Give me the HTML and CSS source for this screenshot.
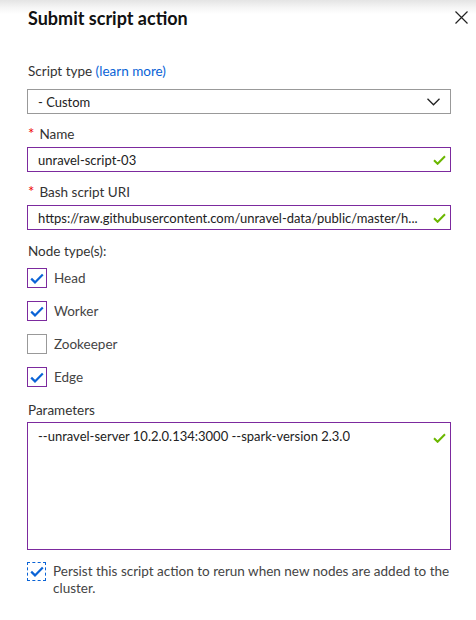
FILE: index.html
```html
<!DOCTYPE html>
<html>
<head>
<meta charset="utf-8">
<link rel="stylesheet" href="styles.css">
</head>
<body>
<div class="panel">
  <header class="head">
    <h1 class="title">Submit script action</h1>
    <svg class="close" width="13" height="13" viewBox="0 0 13 13"><path d="M0.5 0.5L12.5 12.5M12.5 0.5L0.5 12.5" stroke="#222" stroke-width="1.2" fill="none"/></svg>
  </header>

  <div class="label l-type">Script type <a class="link">(learn more)</a></div>
  <div class="box select">
    <span>- Custom</span>
    <svg width="13" height="8" viewBox="0 0 13 8"><path d="M0.5 0.8L6.5 6.8L12.5 0.8" stroke="#222" stroke-width="1.3" fill="none"/></svg>
  </div>

  <div class="label l-req"><span class="star">*</span>Name</div>
  <div class="box valid">
    <span class="val">unravel-script-03</span>
    <svg class="ok" width="13" height="10" viewBox="0 0 13 10"><path d="M1 5.2L4.6 8.8L12 1.2" stroke="#6bb700" stroke-width="2" fill="none"/></svg>
  </div>

  <div class="label l-req"><span class="star">*</span>Bash script URI</div>
  <div class="box valid">
    <span class="val">https://raw.githubusercontent.com/unravel-data/public/master/h...</span>
    <svg class="ok" width="13" height="10" viewBox="0 0 13 10"><path d="M1 5.2L4.6 8.8L12 1.2" stroke="#6bb700" stroke-width="2" fill="none"/></svg>
  </div>

  <div class="label l-node">Node type(s):</div>
  <div class="checks">
    <div class="check"><span class="cb on"><svg width="14" height="11" viewBox="0 0 14 11"><path d="M1.2 5.6L5 9.4L12.8 1.4" stroke="#0a63d6" stroke-width="2.2" fill="none"/></svg></span><span>Head</span></div>
    <div class="check"><span class="cb on"><svg width="14" height="11" viewBox="0 0 14 11"><path d="M1.2 5.6L5 9.4L12.8 1.4" stroke="#0a63d6" stroke-width="2.2" fill="none"/></svg></span><span>Worker</span></div>
    <div class="check"><span class="cb"></span><span>Zookeeper</span></div>
    <div class="check"><span class="cb on"><svg width="14" height="11" viewBox="0 0 14 11"><path d="M1.2 5.6L5 9.4L12.8 1.4" stroke="#0a63d6" stroke-width="2.2" fill="none"/></svg></span><span>Edge</span></div>
  </div>

  <div class="label l-param">Parameters</div>
  <div class="box valid area">
    <span class="val">--unravel-server 10.2.0.134:3000 --spark-version 2.3.0</span>
    <svg class="ok" width="13" height="10" viewBox="0 0 13 10"><path d="M1 5.2L4.6 8.8L12 1.2" stroke="#6bb700" stroke-width="2" fill="none"/></svg>
  </div>

  <div class="persist">
    <span class="cb focus"><svg width="14" height="11" viewBox="0 0 14 11"><path d="M1.2 5.6L5 9.4L12.8 1.4" stroke="#0a63d6" stroke-width="2.2" fill="none"/></svg></span>
    <span class="ptext">Persist this script action to rerun when new nodes are added to the cluster.</span>
  </div>
</div>
</body>
</html>
```
FILE: styles.css
```css
* { box-sizing: border-box; }
html, body { margin: 0; padding: 0; background: #fff; }
body {
  width: 476px;
  height: 620px;
  font-family: Lato, "Noto Sans", sans-serif;
  font-size: 13.5px;
  color: #333;
  background: linear-gradient(#e4e4e4 0px, #f6f6f6 8px, #fff 14px) no-repeat;
  background-size: 100% 16px;
}
.panel { padding: 0 25px 0 27px; }
.head {
  display: flex;
  justify-content: space-between;
  align-items: center;
  height: 34px;
  padding-top: 1px;
}
.title {
  margin: 0 0 0 1px;
  font-size: 18px;
  font-weight: 700;
  color: #111;
  letter-spacing: 0;
}
.close { margin-right: -17px; margin-top: 0; }
.label { line-height: 18px; height: 18px; padding-left: 1px; color: #333; }
.link { color: #0a63d6; }
.l-type { margin-top: 28px; }
.star { color: #e00; margin-right: 5px; font-size: 15px; }
.l-req { margin-top: 10px; margin-bottom: 5px; }
.l-node { margin-top: 12px; }
.l-param { margin-top: 14px; margin-bottom: 3px; }
.box {
  height: 25px;
  border: 1px solid #999;
  display: flex;
  align-items: center;
  justify-content: space-between;
  padding: 0 4px 0 10px;
  color: #222;
  white-space: nowrap;
  font-size: 13px;
}
.val { overflow: hidden; }
.select { margin-top: 9px; padding-right: 10px; }
.valid { border-color: #7c2a9e; }
.ok { flex: none; margin-left: 6px; margin-right: 0; }
.area { height: 128px; align-items: flex-start; padding-top: 5px; }
.area .ok { margin-top: 5px; }
.checks { margin-top: 8px; display: flex; flex-direction: column; gap: 13px; }
.check { display: flex; align-items: center; gap: 7px; height: 20px; color: #444; }
.cb {
  width: 20px; height: 20px;
  border: 1px solid #999;
  display: flex; align-items: center; justify-content: center;
  flex: none;
}
.cb.on { border-color: #7c2a9e; }
.cb.focus { border: 1px dashed #0a63d6; width: 19px; height: 19px; }
.persist { display: flex; align-items: flex-start; gap: 7px; margin-top: 12px; }
.ptext { line-height: 17px; color: #444; margin-top: 1px; }
```
